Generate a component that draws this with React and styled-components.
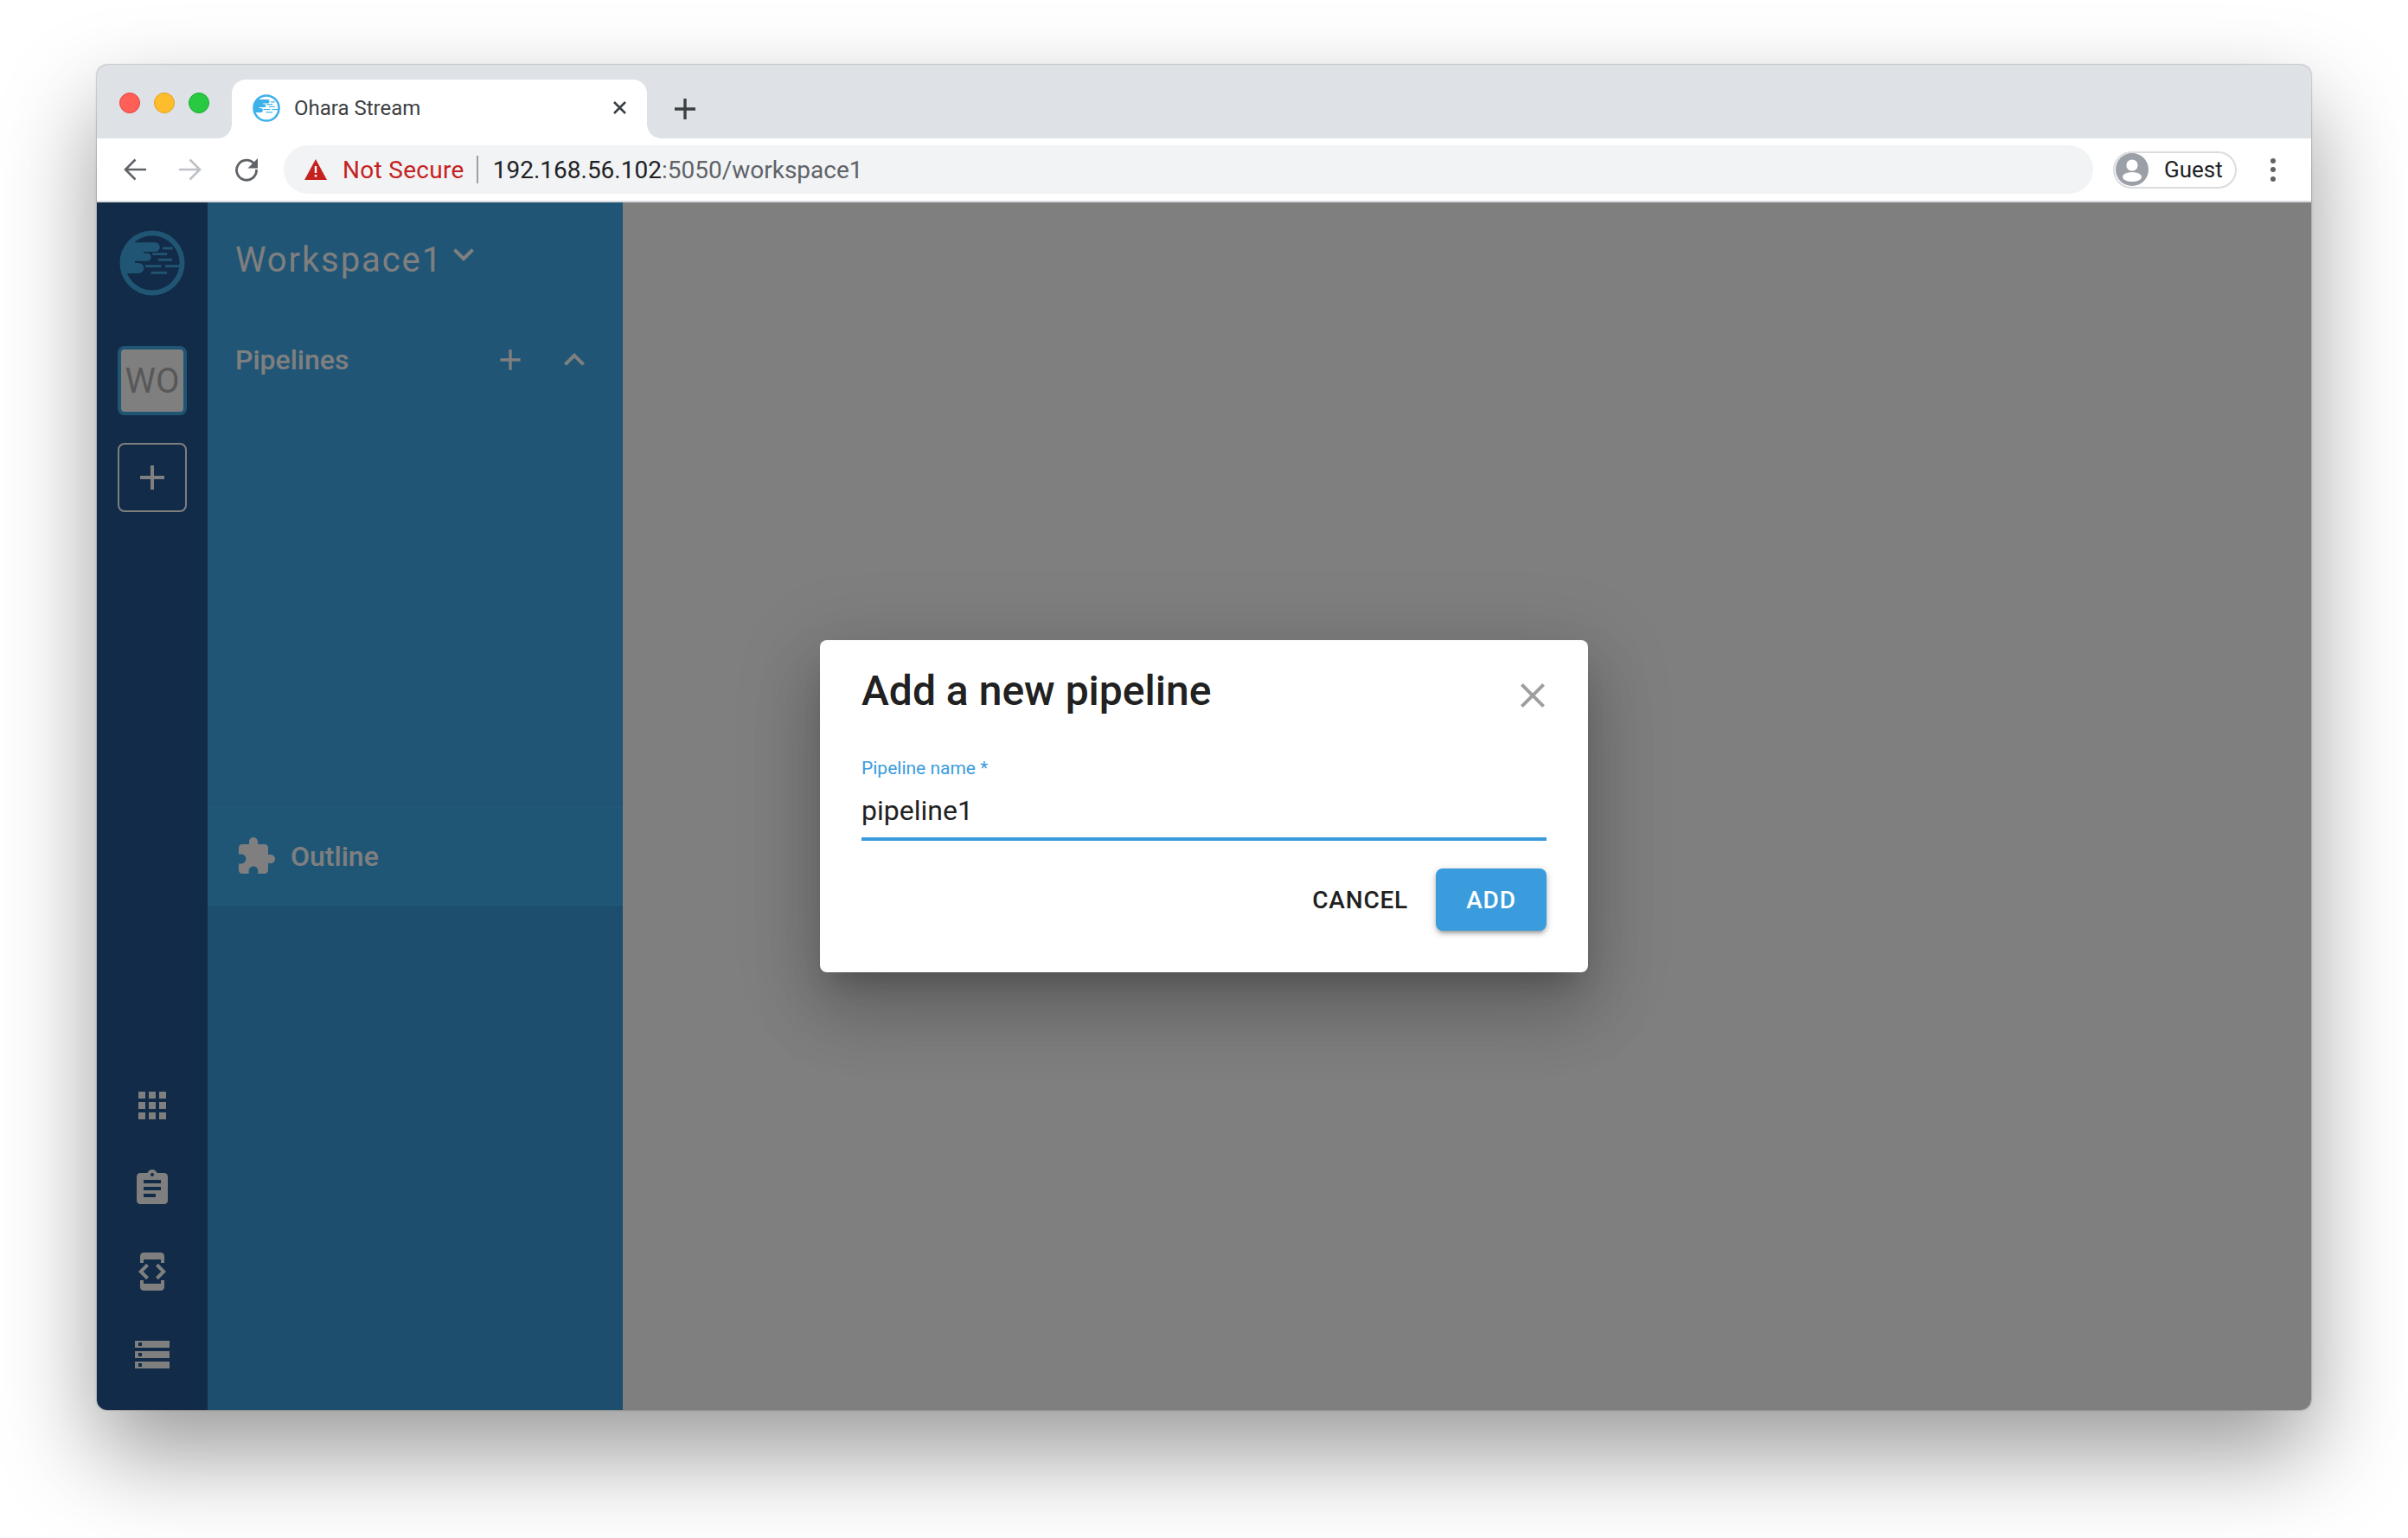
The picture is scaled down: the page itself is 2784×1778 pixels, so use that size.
import React from 'react';
import styled, { createGlobalStyle } from 'styled-components';

const Global = createGlobalStyle`
  html, body { margin: 0; padding: 0; background: #fff; }
  body { width: 2784px; height: 1778px; overflow: hidden; font-family: Roboto, "Liberation Sans", sans-serif; }
  * { box-sizing: border-box; }
`;

const Page = styled.div`
  width: 2784px;
  height: 1778px;
  padding: 75px 112px 148px;
  background: #fff;
`;
const Window = styled.div`
  position: relative;
  height: 100%;
  display: flex;
  flex-direction: column;
  border-radius: 12px;
  background: #dee1e6;
  box-shadow: 0 50px 110px 0 rgba(0,0,0,.4), 0 0 2px rgba(0,0,0,.55);
`;
const TabStrip = styled.div`
  height: 85px;
  flex: none;
  display: flex;
  align-items: flex-end;
  padding-left: 26px;
`;
const Lights = styled.div`
  display: flex;
  gap: 16px;
  align-self: flex-start;
  margin-top: 32px;
`;
const Light = styled.span`
  width: 24px;
  height: 24px;
  border-radius: 50%;
  background: ${p => p.$c};
  border: 1px solid ${p => p.$b};
`;
const Tab = styled.div`
  position: relative;
  width: 480px;
  height: 68px;
  margin-left: 26px;
  padding: 0 21px 2px 24px;
  display: flex;
  align-items: center;
  background: #fff;
  border-radius: 16px 16px 0 0;
  color: #3c4043;
  font-size: 24px;
  &::before, &::after {
    content: '';
    position: absolute;
    bottom: 0;
    width: 16px;
    height: 16px;
    background: radial-gradient(circle at 0 0, #dee1e6 15.5px, #fff 16px);
  }
  &::before { left: -16px; }
  &::after { right: -16px; background: radial-gradient(circle at 100% 0, #dee1e6 15.5px, #fff 16px); }
`;
const TabTitle = styled.span`
  margin-left: 16px;
  flex: 1;
`;
const NewTab = styled.div`
  align-self: flex-end;
  margin: 0 0 22px 32px;
  height: 24px;
  display: flex;
`;
const Toolbar = styled.div`
  height: 72px;
  flex: none;
  display: flex;
  align-items: center;
  background: #fff;
  padding: 0 0 0 31px;
`;
const NavIcons = styled.div`
  display: flex;
  gap: 38px;
  align-items: center;
  width: 185px;
`;
const Omnibox = styled.div`
  width: 2092px;
  height: 56px;
  border-radius: 28px;
  background: #f1f3f4;
  display: flex;
  align-items: center;
  padding-left: 24px;
  font-size: 28px;
`;
const NotSecure = styled.span`
  color: #c5221f;
  margin-left: 18px;
  letter-spacing: .3px;
`;
const Sep = styled.span`
  width: 2px;
  height: 32px;
  background: #9aa0a6;
  margin: 0 17px 0 14px;
`;
const Host = styled.span`
  color: #202124;
`;
const UrlPath = styled.span`
  color: #5f6368;
`;
const Chip = styled.div`
  margin-left: 23px;
  width: 143px;
  height: 43px;
  border-radius: 22px;
  border: 2px solid #dadce0;
  display: flex;
  align-items: center;
  color: #202124;
  font-size: 26px;
  padding-left: 1px;
`;
const ChipName = styled.span`
  margin-left: 18px;
`;
const Dots = styled.div`
  margin-left: 39px;
  display: flex;
  flex-direction: column;
  gap: 4.5px;
`;
const Dot = styled.span`
  width: 6px;
  height: 6px;
  border-radius: 50%;
  background: #5f6368;
`;
const Divider = styled.div`
  height: 2px;
  flex: none;
  background: #dadce0;
`;
const Content = styled.div`
  position: relative;
  flex: 1;
  display: flex;
  background: #fff;
  overflow: hidden;
  border-radius: 0 0 12px 12px;
`;
const Nav = styled.nav`
  width: 128px;
  flex: none;
  background: #245690;
  display: flex;
  flex-direction: column;
  align-items: center;
  padding: 32px 0 40px;
`;
const Logo = styled.div`
  width: 76px;
  height: 76px;
  display: flex;
`;
const WorkspaceChip = styled.div`
  width: 80px;
  height: 80px;
  margin-top: 58px;
  border: 4px solid #40ace9;
  border-radius: 8px;
  background: #fff;
  color: #b0b0b0;
  font-size: 40px;
  display: flex;
  align-items: center;
  justify-content: center;
`;
const AddWorkspace = styled.div`
  width: 80px;
  height: 80px;
  margin-top: 32px;
  border: 2px solid #fff;
  border-radius: 8px;
  display: flex;
  align-items: center;
  justify-content: center;
`;
const NavBottom = styled.div`
  margin-top: auto;
  display: flex;
  flex-direction: column;
  gap: 48px;
`;
const Icon = styled.svg`
  width: ${p => p.$s || 48}px;
  height: ${p => p.$s || 48}px;
  fill: ${p => p.$c || '#fff'};
  display: block;
  flex: none;
`;
const Panel = styled.aside`
  width: 480px;
  flex: none;
  display: flex;
  flex-direction: column;
  background: #3a9cdd;
`;
const PanelTop = styled.div`
  height: 698px;
  flex: none;
  background: #40abea;
  padding: 0 32px;
  color: #fff;
`;
const WorkspaceTitle = styled.div`
  height: 132px;
  display: flex;
  align-items: center;
  font-size: 40px;
  letter-spacing: 1.9px;
`;
const TitleChevron = styled.span`
  display: flex;
  margin: -12px 0 0 0;
`;
const PipelinesHead = styled.div`
  display: flex;
  align-items: center;
  font-size: 32px;
  font-weight: 500;
  height: 48px;
  margin-top: 26px;
`;
const PipelinesLabel = styled.span`
  flex: 1;
`;
const HeadIcons = styled.div`
  display: flex;
  align-items: center;
  gap: 30px;
`;
const OutlineRow = styled.div`
  height: 115px;
  flex: none;
  display: flex;
  align-items: center;
  background: #40adeb;
  border-top: 2px solid #43b0ee;
  border-bottom: 2px solid #43b0ee;
  padding-left: 32px;
  color: #fff;
  font-size: 32px;
  font-weight: 500;
`;
const OutlineLabel = styled.span`
  margin-left: 16px;
`;
const Main = styled.main`
  flex: 1;
  background: #fff;
`;
const Overlay = styled.div`
  position: absolute;
  inset: 0;
  background: rgba(0,0,0,.5);
  display: flex;
  align-items: center;
  justify-content: center;
`;
const Modal = styled.div`
  width: 888px;
  height: 384px;
  background: #fff;
  border-radius: 8px;
  display: flex;
  flex-direction: column;
  padding: 0 48px;
  box-shadow: 0 22px 30px -14px rgba(0,0,0,.2), 0 48px 76px 6px rgba(0,0,0,.14), 0 18px 92px 16px rgba(0,0,0,.12);
`;
const ModalHead = styled.div`
  height: 110px;
  flex: none;
  padding-top: 6px;
  display: flex;
  align-items: center;
  justify-content: space-between;
`;
const ModalTitle = styled.h2`
  margin: 0;
  font-size: 48px;
  font-weight: 500;
  color: #212121;
`;
const CloseBtn = styled.div`
  margin: 12px -8px 0 0;
  display: flex;
`;
const Field = styled.div`
  flex: none;
  height: 122px;
  display: flex;
  flex-direction: column;
`;
const FieldLabel = styled.label`
  font-size: 21px;
  line-height: 28px;
  margin-top: 24px;
  color: #3a9cdd;
`;
const FieldValue = styled.div`
  font-size: 32px;
  line-height: 40px;
  margin-top: 15px;
  color: #212121;
  border-bottom: 4px solid #3a9cdd;
  height: 55px;
`;
const Actions = styled.div`
  display: flex;
  justify-content: flex-end;
  align-items: center;
  margin-top: 32px;
`;
const TextBtn = styled.div`
  color: #212121;
  font-size: 28px;
  font-weight: 500;
  letter-spacing: .8px;
  margin-right: 32px;
`;
const PrimaryBtn = styled.div`
  width: 128px;
  height: 72px;
  border-radius: 8px;
  background: #3a9cdd;
  color: #fff;
  font-size: 28px;
  font-weight: 500;
  letter-spacing: .8px;
  display: flex;
  align-items: center;
  justify-content: center;
  box-shadow: 0 2px 10px rgba(0,0,0,.2), 0 4px 4px rgba(0,0,0,.14), 0 6px 2px -4px rgba(0,0,0,.12);
`;

const P = {
  apps: 'M4 8h4V4H4v4zm6 12h4v-4h-4v4zm-6 0h4v-4H4v4zm0-6h4v-4H4v4zm6 0h4v-4h-4v4zm6-10v4h4V4h-4zm-6 4h4V4h-4v4zm6 6h4v-4h-4v4zm0 6h4v-4h-4v4z',
  assignment: 'M19 3h-4.18C14.4 1.84 13.3 1 12 1c-1.3 0-2.4.84-2.82 2H5c-1.1 0-2 .9-2 2v14c0 1.1.9 2 2 2h14c1.1 0 2-.9 2-2V5c0-1.1-.9-2-2-2zm-7 0c.55 0 1 .45 1 1s-.45 1-1 1-1-.45-1-1 .45-1 1-1zm2 14H7v-2h7v2zm3-4H7v-2h10v2zm0-4H7V7h10v2z',
  dev: 'M7 5h10v2h2V3c0-1.1-.9-1.99-2-1.99L7 1c-1.1 0-2 .9-2 2v4h2V5zm8.41 11.59L20 12l-4.59-4.59L14 8.83 17.17 12 14 15.17l1.41 1.42zM10 15.17L6.83 12 10 8.83 8.59 7.41 4 12l4.59 4.59L10 15.17zM17 19H7v-2H5v4c0 1.1.9 2 2 2h10c1.1 0 2-.9 2-2v-4h-2v2z',
  storage: 'M2 20h20v-4H2v4zm2-3h2v2H4v-2zM2 4v4h20V4H2zm4 3H4V5h2v2zm-4 7h20v-4H2v4zm2-3h2v2H4v-2z',
  ext: 'M20.5 11H19V7c0-1.1-.9-2-2-2h-4V3.5C13 2.12 11.88 1 10.5 1S8 2.12 8 3.5V5H4c-1.1 0-1.99.9-1.99 2v3.8H3.5c1.49 0 2.7 1.21 2.7 2.7s-1.21 2.7-2.7 2.7H2V20c0 1.1.9 2 2 2h3.8v-1.5c0-1.49 1.21-2.7 2.7-2.7 1.49 0 2.7 1.21 2.7 2.7V22H17c1.1 0 2-.9 2-2v-4h1.5c1.38 0 2.5-1.12 2.5-2.5S21.88 11 20.5 11z',
  add: 'M19 13h-6v6h-2v-6H5v-2h6V5h2v6h6v2z',
  close: 'M19 6.41L17.59 5 12 10.59 6.41 5 5 6.41 10.59 12 5 17.59 6.41 19 12 13.41 17.59 19 19 17.59 13.41 12z',
  down: 'M7.41 8.59L12 13.17l4.59-4.58L18 10l-6 6-6-6 1.41-1.41z',
  up: 'M7.41 15.41L12 10.83l4.59 4.58L18 14l-6-6-6 6z',
};
const Mi = ({ d, s, c }) => <Icon viewBox="0 0 24 24" $s={s} $c={c}><path d={d} /></Icon>;

const OharaMark = ({ ring, size }) => (
  <svg viewBox="0 0 76 76" width={size} height={size} style={{ display: 'block' }}>
    <circle cx="38" cy="38" r="34.5" fill="none" stroke={ring} strokeWidth="6" />
    <path fill={ring} d="M12.2 14.3H41.4a5.35 5.35 0 0 1 0 10.7H28v1.7H32.2a4.5 4.5 0 0 1 0 9H18v2.3H22.3a6 6 0 0 1 0 12H5.1A35 35 0 0 1 12.2 14.3z" />
    <g stroke={ring} strokeWidth="2.8">
      <line x1="50" y1="21" x2="61.7" y2="21" />
      <line x1="38.3" y1="27.7" x2="55" y2="27.7" />
      <line x1="45" y1="34.3" x2="61" y2="34.3" />
      <line x1="30" y1="41.7" x2="48.3" y2="41.7" />
      <line x1="53" y1="41.7" x2="72" y2="41.7" />
      <line x1="36.7" y1="49.3" x2="55" y2="49.3" />
    </g>
  </svg>
);

export default function App() {
  return (
    <>
      <Global />
      <Page>
        <Window>
          <TabStrip>
            <Lights>
              <Light $c="#ff5f57" $b="#e2463f" />
              <Light $c="#ffbd2e" $b="#e1a116" />
              <Light $c="#28ca42" $b="#14ae2c" />
            </Lights>
            <Tab>
              <OharaMark ring="#3eb1ea" size={32} />
              <TabTitle>Ohara Stream</TabTitle>
              <svg width="20" height="20" viewBox="0 0 20 20"><path d="M3 3 L16 16 M16 3 L3 16" stroke="#3c4043" strokeWidth="2.6" fill="none" /></svg>
            </Tab>
            <NewTab>
              <svg width="24" height="24" viewBox="0 0 24 24"><path d="M12 0v24M0 12h24" stroke="#3c4043" strokeWidth="3.4" fill="none" /></svg>
            </NewTab>
          </TabStrip>
          <Toolbar>
            <NavIcons>
              <svg width="26" height="26" viewBox="0 0 26 26"><path d="M26 13H3M13.5 1.5 2 13l11.5 11.5" stroke="#5f6368" strokeWidth="2.6" fill="none" /></svg>
              <svg width="26" height="26" viewBox="0 0 26 26"><path d="M0 13h23M12.5 1.5 24 13 12.5 24.5" stroke="#bdc1c6" strokeWidth="2.6" fill="none" /></svg>
              <svg width="28" height="28" viewBox="0 0 28 28"><path d="M23 7.5A11.5 11.5 0 1 0 25.5 14" stroke="#5f6368" strokeWidth="2.8" fill="none" /><path d="M27 1v11.5H15.5z" fill="#5f6368" /></svg>
            </NavIcons>
            <Omnibox>
              <svg width="26" height="24" viewBox="0 0 26 24"><path d="M13 0 26 24H0z" fill="#c5221f" /><path d="M11.8 8h2.4v8h-2.4zM11.8 18h2.4v2.6h-2.4z" fill="#fff" /></svg>
              <NotSecure>Not Secure</NotSecure>
              <Sep />
              <Host>192.168.56.102</Host><UrlPath>:5050/workspace1</UrlPath>
            </Omnibox>
            <Chip>
              <svg width="38" height="38" viewBox="0 0 38 38"><circle cx="19" cy="19" r="19" fill="#9aa0a6" /><circle cx="19" cy="14" r="6.6" fill="#fff" /><ellipse cx="19" cy="27.5" rx="11" ry="5.5" fill="#fff" /></svg>
              <ChipName>Guest</ChipName>
            </Chip>
            <Dots><Dot /><Dot /><Dot /></Dots>
          </Toolbar>
          <Divider />
          <Content>
            <Nav>
              <Logo><OharaMark ring="#40ace9" size={76} /></Logo>
              <WorkspaceChip>WO</WorkspaceChip>
              <AddWorkspace><Mi d={P.add} s={48} /></AddWorkspace>
              <NavBottom>
                <Mi d={P.apps} />
                <Mi d={P.assignment} />
                <Mi d={P.dev} />
                <Mi d={P.storage} />
              </NavBottom>
            </Nav>
            <Panel>
              <PanelTop>
                <WorkspaceTitle>
                  Workspace1
                  <TitleChevron><Mi d={P.down} s={48} /></TitleChevron>
                </WorkspaceTitle>
                <PipelinesHead>
                  <PipelinesLabel>Pipelines</PipelinesLabel>
                  <HeadIcons>
                    <Mi d={P.add} s={40} />
                    <Mi d={P.up} s={48} />
                  </HeadIcons>
                </PipelinesHead>
              </PanelTop>
              <OutlineRow>
                <Mi d={P.ext} />
                <OutlineLabel>Outline</OutlineLabel>
              </OutlineRow>
            </Panel>
            <Main />
            <Overlay>
              <Modal>
                <ModalHead>
                  <ModalTitle>Add a new pipeline</ModalTitle>
                  <CloseBtn><Mi d={P.close} c="#9e9e9e" /></CloseBtn>
                </ModalHead>
                <Field>
                  <FieldLabel>Pipeline name *</FieldLabel>
                  <FieldValue>pipeline1</FieldValue>
                </Field>
                <Actions>
                  <TextBtn>CANCEL</TextBtn>
                  <PrimaryBtn>ADD</PrimaryBtn>
                </Actions>
              </Modal>
            </Overlay>
          </Content>
        </Window>
      </Page>
    </>
  );
}
